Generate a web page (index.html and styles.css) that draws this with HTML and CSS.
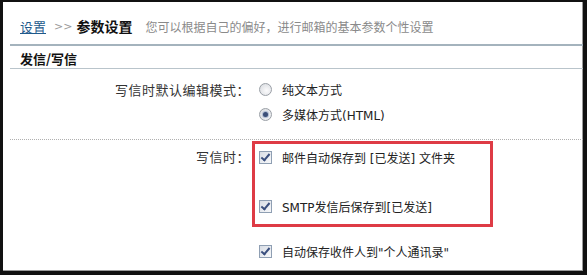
FILE: index.html
```html
<!DOCTYPE html>
<html lang="zh-CN">
<head>
  <meta charset="UTF-8">
  <title>参数设置</title>
  <link rel="stylesheet" href="styles.css">
</head>
<body>
  <div class="frame">
    <div class="crumb">
      <a href="#">设置</a>
      <span class="sep">&gt;&gt;</span>
      <strong>参数设置</strong>
      <span class="desc">您可以根据自己的偏好，进行邮箱的基本参数个性设置</span>
    </div>

    <h2 class="section-title">发信/写信</h2>

    <div class="form">
      <div class="row">
        <div class="label">写信时默认编辑模式：</div>
        <div class="opts">
          <label class="opt"><input type="radio" name="mode">纯文本方式</label>
          <label class="opt"><input type="radio" name="mode" checked>多媒体方式(HTML)</label>
        </div>
      </div>

      <div class="divider"></div>

      <div class="row row-write">
        <div class="label">写信时：</div>
        <div class="opts opts-write">
          <div class="mark">
            <label class="opt"><input type="checkbox" checked>邮件自动保存到 [已发送] 文件夹</label>
            <label class="opt opt-smtp"><input type="checkbox" checked>SMTP发信后保存到[已发送]</label>
          </div>
          <label class="opt opt-last"><input type="checkbox" checked>自动保存收件人到"个人通讯录"</label>
        </div>
      </div>
    </div>
  </div>
</body>
</html>
```

FILE: styles.css
```css
html, body {
  margin: 0;
  height: 100%;
  background: #fff;
}

body {
  font-family: "DejaVu Sans", "Noto Sans CJK SC", sans-serif;
  font-size: 12px;
  color: #222;
}

.frame {
  box-sizing: border-box;
  height: 275px;
  border-style: solid;
  border-color: #111;
  border-width: 2px 4px 4px 3px;
  box-shadow: inset -1px -1px 0 #9a9a9a;
  padding-left: 7px;
  overflow: hidden;
}

/* fil d'ariane */
.crumb {
  display: flex;
  align-items: center;
  height: 36px;
  padding-top: 6px;
  padding-left: 10px;
  border-bottom: 2px solid #a4b3bd;
  font-family: "Noto Sans CJK SC", sans-serif;
  font-size: 13px;
}

.crumb a {
  color: #1f5a8c;
  text-decoration: underline;
}

.crumb .sep {
  color: #9a9a9a;
  margin: 0 4px 0 8px;
  font-family: "DejaVu Sans", sans-serif;
  font-size: 11px;
}

.crumb strong {
  font-size: 14px;
  color: #111;
}

.crumb .desc {
  color: #8a8a8a;
  font-size: 12px;
  margin-left: 13px;
}

.section-title {
  margin: 0;
  padding: 4px 0 0 10px;
  height: 18px;
  line-height: 18px;
  font-family: "Noto Sans CJK SC", sans-serif;
  font-size: 13px;
  font-weight: bold;
  color: #111;
  border-bottom: 1px solid #b9c4cb;
}

/* formulaire */
.form {
  padding-top: 8px;
}

.row {
  display: grid;
  grid-template-columns: 240px 1fr;
}

.label {
  text-align: right;
  line-height: 25px;
  color: #333;
  font-size: 13px;
  letter-spacing: 0.5px;
  font-family: "Noto Sans CJK SC", sans-serif;
}

.opts {
  display: flex;
  flex-direction: column;
  padding-left: 9px;
}

.opt {
  display: flex;
  align-items: center;
  height: 25px;
  white-space: nowrap;
}

.divider {
  margin-top: 12px;
  border-top: 1px dotted #b0b0b0;
}

.row-write {
  margin-top: 1px;
}

.row-write .label {
  padding-top: 3px;
  line-height: 26px;
}

.opts-write {
  padding-left: 0;
}

.mark {
  width: 231px;
  margin-left: 2px;
  padding: 0 0 5px 4px;
  border: 3px solid #de3b45;
}

.mark .opt {
  height: 26px;
}

.mark .opt-smtp {
  margin-top: 23px;
}

.opt-last {
  margin-top: 11px;
  padding-left: 9px;
  height: 26px;
}

/* cases à cocher et boutons radio façon XP */
input[type="checkbox"],
input[type="radio"] {
  appearance: none;
  -webkit-appearance: none;
  position: relative;
  width: 13px;
  height: 13px;
  margin: 0 10px 0 0;
  flex: none;
  background: linear-gradient(135deg, #d8dde5, #f7f8fa);
}

input[type="checkbox"] {
  border: 1px solid #8f9fb3;
  box-sizing: border-box;
}

input[type="checkbox"]:checked::after {
  content: "";
  position: absolute;
  left: 3px;
  top: 0px;
  width: 3px;
  height: 7px;
  border: solid #3a4f7e;
  border-width: 0 2px 2px 0;
  transform: rotate(40deg);
}

input[type="radio"] {
  box-sizing: border-box;
  border: 1px solid #9a9fa6;
  border-radius: 50%;
  background: radial-gradient(circle at 60% 60%, #fbfbfc, #d5d8dd);
}

input[type="radio"]:checked::after {
  content: "";
  position: absolute;
  left: 3px;
  top: 3px;
  width: 5px;
  height: 5px;
  border-radius: 50%;
  background: #3b4f78;
  box-shadow: 0 0 1px 1px #a9b7cf;
}
```
